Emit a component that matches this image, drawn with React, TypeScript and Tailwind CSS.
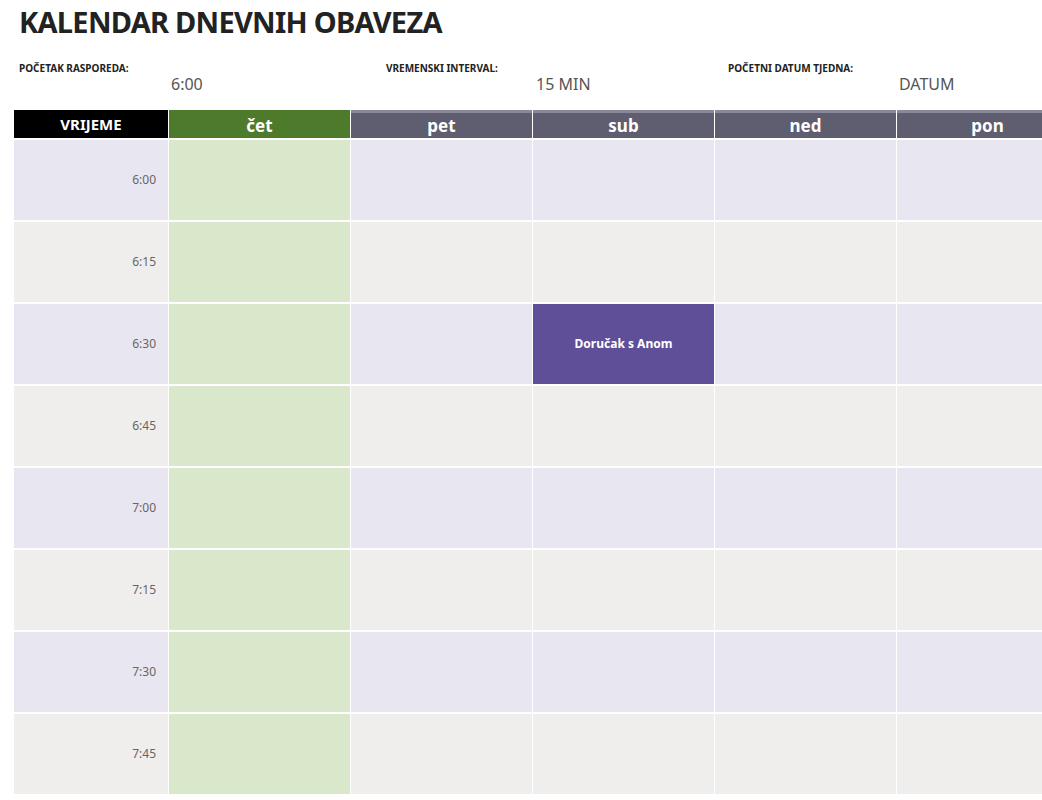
import React from 'react';

const days = ['čet', 'pet', 'sub', 'ned', 'pon'];
const times = ['6:00', '6:15', '6:30', '6:45', '7:00', '7:15', '7:30', '7:45'];

const App: React.FC = () => {
  return (
    <div className="w-[1042px] h-[800px] overflow-hidden bg-white font-['Open_Sans',sans-serif] text-[#222]">
      <h1 className="pl-[19px] pt-[3px] text-[29px] font-bold leading-[38px] tracking-tight">
        KALENDAR DNEVNIH OBAVEZA
      </h1>
      {/* schedule settings */}
      <div className="flex h-[57px] pt-[20px]">
        <div className="w-[386px] pl-[19px]">
          <div className="text-[10px] font-bold leading-[14px]">POČETAK RASPOREDA:</div>
          <div className="pl-[152px] text-[16px] text-[#555] leading-[18px]">6:00</div>
        </div>
        <div className="w-[342px]">
          <div className="text-[10px] font-bold leading-[14px]">VREMENSKI INTERVAL:</div>
          <div className="pl-[150px] text-[16px] text-[#555] leading-[18px]">15 MIN</div>
        </div>
        <div>
          <div className="text-[10px] font-bold leading-[14px]">POČETNI DATUM TJEDNA:</div>
          <div className="pl-[171px] text-[16px] text-[#555] leading-[18px]">DATUM</div>
        </div>
      </div>
      <div className="pl-[14px] mt-[12px]">
        <div className="grid grid-cols-[154px_repeat(5,181px)] gap-x-[1px] w-max">
          <div className="h-[28px] bg-black text-white font-bold text-[15px] flex items-center justify-center">VRIJEME</div>
          {days.map((d, i) => (
            <div
              key={d}
              className={`h-[28px] text-white font-bold text-[17px] flex items-center justify-center border-t-[3px] ${i === 0 ? 'bg-[#4e7a2c] border-[#4e7a2c]' : 'bg-[#5f5d70] border-[#8a899a]'}`}
            >
              {d}
            </div>
          ))}
        </div>
        <div className="mt-[2px] flex flex-col gap-[2px]">
          {times.map((t, r) => {
            const even = r % 2 === 0;
            const rowBg = even ? 'bg-[#e8e6f1]' : 'bg-[#efeeec]';
            return (
              <div key={t} className="grid grid-cols-[154px_repeat(5,181px)] gap-x-[1px] w-max h-[80px]">
                <div className={`${rowBg} flex items-center justify-end pr-[12px] text-[12px] text-[#666]`}>{t}</div>
                {days.map((d, i) => {
                  if (i === 2 && t === '6:30') {
                    return (
                      <div key={d} className="bg-[#5f4f98] flex items-center justify-center text-white text-[12px] font-bold font-['Liberation_Sans',sans-serif]">
                        Doručak s Anom
                      </div>
                    );
                  }
                  return <div key={d} className={i === 0 ? 'bg-[#d9e8ca]' : rowBg} />;
                })}
              </div>
            );
          })}
        </div>
      </div>
    </div>
  );
};

export default App;
